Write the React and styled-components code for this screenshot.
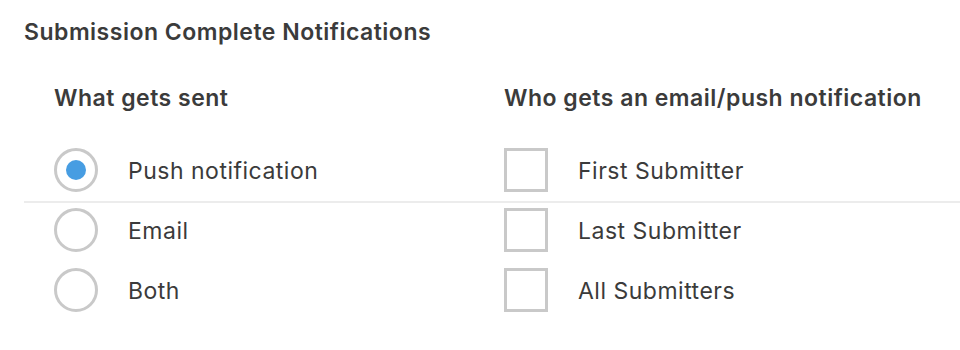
import React from 'react';
import styled, { createGlobalStyle } from 'styled-components';

const GlobalStyle = createGlobalStyle`
  body {
    margin: 0;
    background: #fff;
    font-family: Inter, "Open Sans", sans-serif;
    color: #3b3b3b;
    letter-spacing: 0.5px;
  }
`;

const Section = styled.section`
  padding: 18px 0 0 24px;
`;

const Title = styled.h2`
  margin: 0;
  font-size: 23px;
  line-height: 28px;
  font-weight: 600;
`;

const Row = styled.div`
  display: grid;
  grid-template-columns: 450px 1fr;
  padding-left: 30px;
  ${p => p.divided && `
    padding-bottom: 9px;
    border-bottom: 2px solid #ececec;
    margin-bottom: 5px;
  `}
  ${p => p.spaced && 'margin-bottom: 16px;'}
`;

const Heading = styled.h3`
  margin: 38px 0 36px;
  font-size: 23px;
  line-height: 28px;
  font-weight: 600;
`;

const Option = styled.label`
  display: flex;
  align-items: center;
  gap: 30px;
  font-size: 23px;
  line-height: 28px;
  cursor: pointer;
`;

const Text = styled.span`
  padding-top: 2px;
`;

const Radio = styled.span`
  box-sizing: border-box;
  width: 44px;
  height: 44px;
  border: 3px solid #c9c9c9;
  border-radius: 50%;
  background: #fff;
  display: flex;
  align-items: center;
  justify-content: center;
  flex-shrink: 0;

  &::after {
    content: '';
    width: 20px;
    height: 20px;
    border-radius: 50%;
    background: ${p => (p.checked ? '#479de2' : 'transparent')};
  }
`;

const Checkbox = styled.span`
  box-sizing: border-box;
  width: 44px;
  height: 44px;
  border: 3px solid #c9c9c9;
  background: #fff;
  flex-shrink: 0;
`;

const rows = [
  { send: 'Push notification', who: 'First Submitter', checked: true },
  { send: 'Email', who: 'Last Submitter' },
  { send: 'Both', who: 'All Submitters' },
];

export default function App() {
  return (
    <Section>
      <GlobalStyle />
      <Title>Submission Complete Notifications</Title>
      <Row>
        <Heading>What gets sent</Heading>
        <Heading>Who gets an email/push notification</Heading>
      </Row>
      {rows.map((r, i) => (
        <Row key={r.send} divided={i === 0} spaced={i === 1}>
          <Option>
            <Radio checked={r.checked} />
            <Text>{r.send}</Text>
          </Option>
          <Option>
            <Checkbox />
            <Text>{r.who}</Text>
          </Option>
        </Row>
      ))}
    </Section>
  );
}
